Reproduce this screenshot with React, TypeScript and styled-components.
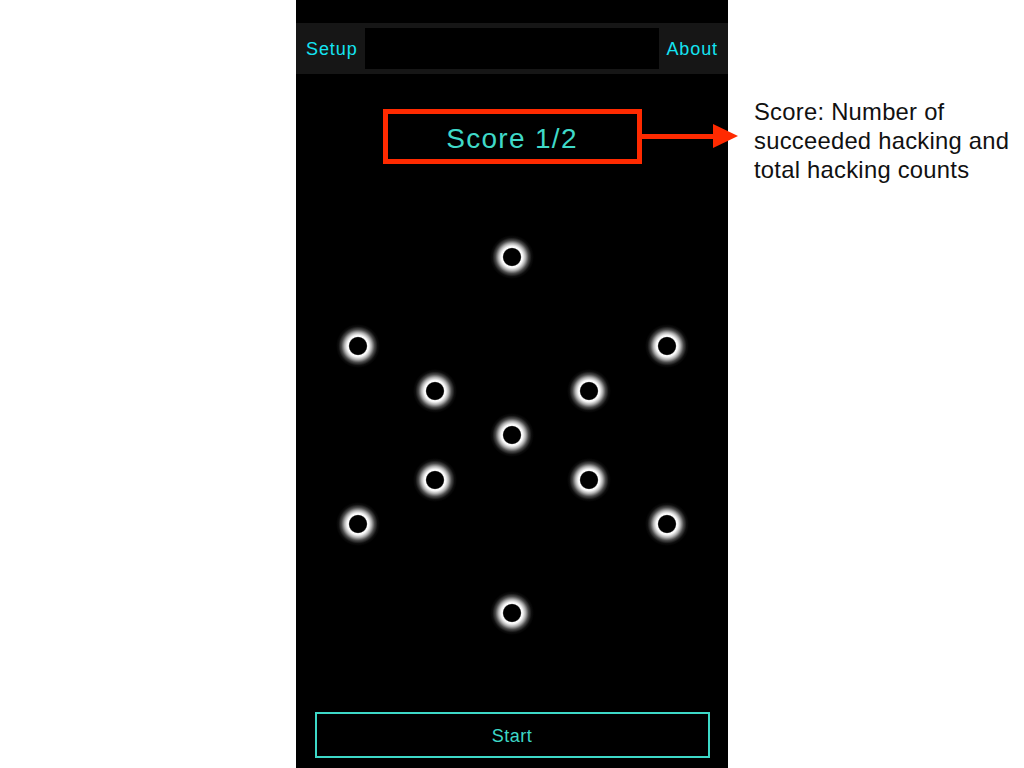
import React from "react";
import styled, { createGlobalStyle } from "styled-components";

const Global = createGlobalStyle`
  html, body { margin: 0; padding: 0; background: #ffffff; }
  body { font-family: "Liberation Sans", Arial, Helvetica, sans-serif; }
`;

const Page = styled.div`
  display: flex;
  flex-direction: row;
  align-items: flex-start;
  width: 1024px;
  height: 768px;
  padding-left: 296px;
  box-sizing: border-box;
  overflow: hidden;
`;

const Phone = styled.div`
  position: relative;
  width: 432px;
  height: 768px;
  background: #000;
  display: flex;
  flex-direction: column;
  align-items: center;
  padding-top: 23px;
  box-sizing: border-box;
`;

const Toolbar = styled.div`
  width: 100%;
  height: 51px;
  background: #161616;
  display: flex;
  align-items: center;
  padding: 0 10px;
  box-sizing: border-box;
  gap: 7px;
`;

const NavLink = styled.span`
  color: #14e4f2;
  font-size: 18px;
  letter-spacing: 0.9px;
  line-height: 1;
`;

const TitleField = styled.div`
  flex: 1;
  height: 41px;
  background: #000;
`;

const ScoreBox = styled.div`
  position: relative;
  margin-top: 35px;
  width: 259px;
  height: 55px;
  border: 5px solid #ff2a00;
  box-sizing: border-box;
  display: flex;
  align-items: center;
  justify-content: center;
  padding-top: 4px;
  color: #3fd9c8;
  font-size: 28px;
  letter-spacing: 1.3px;
`;

const ArrowLine = styled.div`
  position: absolute;
  left: 100%;
  top: 50%;
  margin-top: -2.5px;
  width: 78px;
  height: 5px;
  background: #ff2a00;
`;

const ArrowHead = styled.div`
  position: absolute;
  left: calc(100% + 76px);
  top: 50%;
  margin-top: -12.5px;
  width: 0;
  height: 0;
  border-top: 12.5px solid transparent;
  border-bottom: 12.5px solid transparent;
  border-left: 25px solid #ff2a00;
  z-index: 2;
`;

const DotGrid = styled.div`
  margin-top: 70.75px;
  display: grid;
  grid-template-columns: repeat(5, 77.25px);
  grid-template-rows: repeat(9, 44.5px);
`;

const Dot = styled.div<{ $col: number; $row: number }>`
  grid-column: ${(p) => p.$col};
  grid-row: ${(p) => p.$row};
  justify-self: center;
  align-self: center;
  width: 44px;
  height: 44px;
  border-radius: 50%;
  background: radial-gradient(
    circle,
    #000 0,
    #000 8.4px,
    #ffffff 9.6px,
    #f4f4f4 11px,
    rgba(210, 210, 210, 0.85) 13.5px,
    rgba(150, 150, 150, 0.5) 16.5px,
    rgba(80, 80, 80, 0.18) 19.5px,
    rgba(0, 0, 0, 0) 22px
  );
`;

const StartButton = styled.div`
  margin-top: auto;
  margin-bottom: 10px;
  width: 395px;
  height: 46px;
  border: 2px solid #3dd8c7;
  box-sizing: border-box;
  display: flex;
  align-items: center;
  justify-content: center;
  padding-top: 2px;
  color: #3dd8c7;
  font-size: 18px;
  letter-spacing: 0.5px;
`;

const Annotation = styled.div`
  margin-left: 26px;
  margin-top: 97px;
  color: #111;
  font-size: 23.8px;
  line-height: 29px;
  letter-spacing: 0.25px;
  white-space: nowrap;
`;

const dots: Array<[number, number]> = [
  [3, 1],
  [1, 3],
  [5, 3],
  [2, 4],
  [4, 4],
  [3, 5],
  [2, 6],
  [4, 6],
  [1, 7],
  [5, 7],
  [3, 9],
];

export default function App() {
  return (
    <>
      <Global />
      <Page>
        <Phone>
          <Toolbar>
            <NavLink>Setup</NavLink>
            <TitleField />
            <NavLink>About</NavLink>
          </Toolbar>
          <ScoreBox>
            Score 1/2
            <ArrowLine />
            <ArrowHead />
          </ScoreBox>
          <DotGrid>
            {dots.map(([c, r], i) => (
              <Dot key={i} $col={c} $row={r} />
            ))}
          </DotGrid>
          <StartButton>Start</StartButton>
        </Phone>
        <Annotation>
          Score: Number of
          <br />
          succeeded hacking and
          <br />
          total hacking counts
        </Annotation>
      </Page>
    </>
  );
}
